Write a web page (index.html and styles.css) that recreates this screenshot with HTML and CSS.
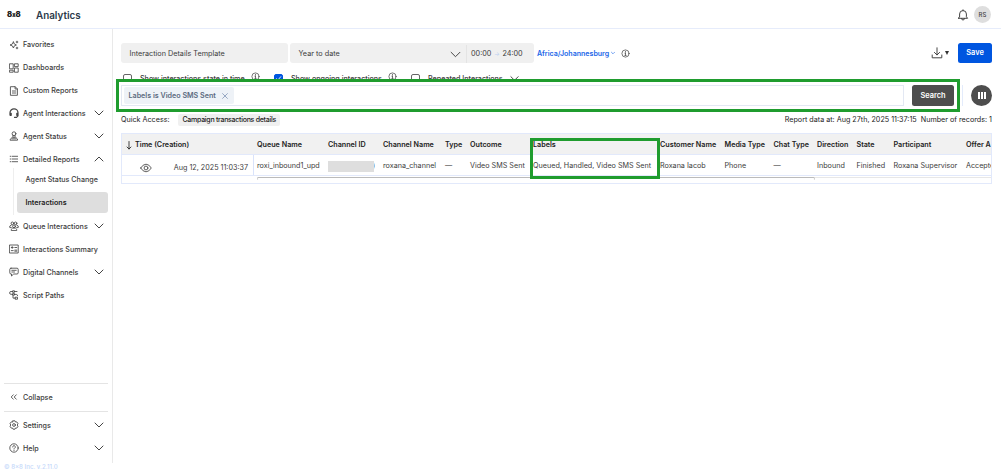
FILE: index.html
```
<!DOCTYPE html>
<html lang="en">
<head>
<meta charset="utf-8">
<title>Analytics</title>
<link rel="stylesheet" href="styles.css">
</head>
<body>
<svg class="defs" aria-hidden="true">
  <symbol id="down" viewBox="0 0 10 10"><path d="M1 3l4 4 4-4"/></symbol>
  <symbol id="up" viewBox="0 0 10 10"><path d="M1 7l4-4 4 4"/></symbol>
  <symbol id="info" viewBox="0 0 10 10"><circle cx="5" cy="5" r="4"/><path d="M5 4.6v2.5M4.3 4.6H5M4.2 7.1h1.6M5 2.6v.8"/></symbol>
</svg>
<header class="top">
  <span class="logo">8<small>x</small>8</span>
  <h1 class="title">Analytics</h1>
  <svg class="bell" viewBox="0 0 12 12"><path d="M1.400 9.300h9.200L9.400 7.800V5A3.400 3.400 0 0 0 2.600 5v2.800zM4.500 9.500a1.500 1.500 0 0 0 3 0M6 .8v.8"/></svg>
  <span class="avatar">RS</span>
</header>
<div class="body">
  <nav class="side">
    <div class="item"><svg class="ico" viewBox="0 0 10 10"><path d="M4.400 2Q4.700 4.700 7.400 5 4.700 5.300 4.400 8 4.100 5.300 1 5 4.100 4.700 4.400 2zM8 1.200v1.600M7.200 2h1.600M8 7.200v1.600M7.200 8h1.600"/></svg><span>Favorites</span></div>
    <div class="item"><svg class="ico" viewBox="0 0 10 10"><path d="M.8.8h3.400v5H.8zM5.800.8h3.400v2.800H5.800zM.8 7.200h3.400v2H.8zM5.800 5h3.400v4.200H5.800z"/></svg><span>Dashboards</span></div>
    <div class="item"><svg class="ico" viewBox="0 0 10 10"><path d="M1.800.7h4.400l2.200 2.200v6.400H1.800zM6.100.8V3h2.200M3.400 5h3.400M3.400 7h3.400"/></svg><span>Custom Reports</span></div>
    <div class="item"><svg class="ico bold" viewBox="0 0 10 10"><path d="M1 7V4.800a4 4 0 0 1 8 0V7.800L7.500 9.300H5.500M1.200 5.300h1v2h-1zM7.800 5.300h1v2h-1z"/></svg><span>Agent Interactions</span><svg class="chev"><use href="#down"/></svg></div>
    <div class="item"><svg class="ico" viewBox="0 0 10 10"><circle cx="5" cy="2.700" r="1.900"/><path d="M3.400 5h3.200M1.500 9.200h7V8L6.800 6.400H3.200L1.500 8zM3 7.800h4"/></svg><span>Agent Status</span><svg class="chev"><use href="#down"/></svg></div>
    <div class="item"><svg class="ico" viewBox="0 0 10 10"><path d="M3.400 2.300h5.200M3.400 5h5.200M3.400 7.700h5.200M1.200 2.300h.8M1.200 5h.8M1.200 7.700h.8"/></svg><span>Detailed Reports</span><svg class="chev"><use href="#up"/></svg></div>
    <div class="sub">
      <div class="subitem">Agent Status Change</div>
      <div class="subitem active">Interactions</div>
    </div>
    <div class="item"><svg class="ico" viewBox="0 0 10 10"><circle cx="3.400" cy="2.300" r="1.300"/><circle cx="6.600" cy="2.300" r="1.300"/><circle cx="5" cy="5.300" r="1.400"/><path d="M2.300 9.200V8.300l1.300-1.200h2.800l1.300 1.200v.9zM2.500 3.900L.8 5v1.600h1.500M7.500 3.900L9.200 5v1.600H7.700"/></svg><span>Queue Interactions</span><svg class="chev"><use href="#down"/></svg></div>
    <div class="item"><svg class="ico" viewBox="0 0 10 10"><path d="M.8 1h8.400v8H.8zM2.300 3.500h1.900M5.800 3.500h1.900M3.200 2.600v1.800M2.300 6.600h1.900M5.800 6.100h1.900M5.800 7.200h1.900"/></svg><span>Interactions Summary</span></div>
    <div class="item"><svg class="ico" viewBox="0 0 10 10"><path d="M2 1.200h6a1.200 1.200 0 0 1 1.200 1.200v3.400A1.200 1.200 0 0 1 8 7H4.700L2.500 9V7H2A1.200 1.200 0 0 1 .8 5.800V2.400A1.200 1.200 0 0 1 2 1.200zM2.800 3.300h4.400M2.800 5h2.700"/></svg><span>Digital Channels</span><svg class="chev"><use href="#down"/></svg></div>
    <div class="item"><svg class="ico" viewBox="0 0 10 10"><path d="M3.500 1.500H2a1.300 1.300 0 0 0 0 2.800h1.500M4 .8h1.500v1.500H4zM5.500 1.500H8M4 3.600h1.500v1.500H4zM5.500 4.400h1.800a1.300 1.300 0 0 1 1.300 1.300M4 5.100v3h2.400M6.500 7.200h2v2h-2z"/></svg><span>Script Paths</span></div>
    <div class="bottom">
      <div class="collapse item"><svg class="ico" viewBox="0 0 10 10"><path d="M4.300 2.800L2.200 5l2.100 2.200M7.300 2.800L5.200 5l2.100 2.200"/></svg><span>Collapse</span></div>
      <div class="item"><svg class="ico" viewBox="0 0 10 10"><path d="M4 .8h2l.5 1.200 1.300-.1 1.200 1.800-.8 1.300.8 1.300-1.200 1.800-1.300-.1L6 9.200H4L3.500 8l-1.300.1L1 6.300 1.800 5 1 3.700l1.200-1.800 1.300.1z"/><circle cx="5" cy="5" r="1.400"/></svg><span>Settings</span><svg class="chev"><use href="#down"/></svg></div>
      <div class="item"><svg class="ico" viewBox="0 0 10 10"><circle cx="5" cy="5" r="4.200"/><path d="M3.700 4a1.300 1.300 0 1 1 1.900 1.100Q5 5.400 5 6M5 7.300v.2"/></svg><span>Help</span><svg class="chev"><use href="#down"/></svg></div>
    </div>
  </nav>
  <main class="main">
    <div class="filters">
      <div class="field template">Interaction Details Template</div>
      <div class="field range"><span>Year to date</span><svg class="chev"><use href="#down"/></svg><div class="times"><span>00:00</span><i>→</i><span>24:00</span></div></div>
      <span class="zone">Africa/Johannesburg</span><svg class="tiny"><use href="#down"/></svg>
      <svg class="info"><use href="#info"/></svg>
      <svg class="download" viewBox="0 0 12 12"><path d="M6 .8v7M3.400 5.400L6 8l2.600-2.600M1.200 8v2.800h9.600V8"/></svg><span class="caret"></span>
      <button class="save">Save</button>
    </div>
    <div class="checks">
      <div class="check first"><span class="box"></span><span>Show interactions state in time</span><svg class="info"><use href="#info"/></svg></div>
      <div class="check second"><span class="box on"><svg viewBox="0 0 8 8"><path d="M1.500 4.200l1.800 1.600 3.200-3.800"/></svg></span><span>Show ongoing interactions</span><svg class="info"><use href="#info"/></svg></div>
      <div class="check"><span class="box"></span><span>Repeated Interactions</span><svg class="chev"><use href="#down"/></svg></div>
    </div>
    <div class="searchrow">
      <div class="highlight">
        <div class="input"><span class="tag">Labels is Video SMS Sent<svg viewBox="0 0 6 6"><path d="M.6.6l4.800 4.800M5.400.6L.6 5.400"/></svg></span></div>
        <button class="search">Search</button>
      </div>
      <span class="rule"></span>
      <span class="columns"><i></i><i></i><i></i></span>
    </div>
    <div class="quick"><span class="qlabel">Quick Access:</span><span class="qchip">Campaign transactions details</span><span class="report">Report data at: Aug 27th, 2025 11:37:15</span><span class="records">Number of records: 1</span></div>
    <section class="table">
      <div class="row head"><div class="time"><svg class="sort" viewBox="0 0 6 9"><path d="M3 .5v7.500M1 6l2 2 2-2"/></svg><span>Time (Creation)</span></div><span>Queue Name</span><span>Channel ID</span><span>Channel Name</span><span>Type</span><span>Outcome</span><span>Labels</span><span>Customer Name</span><span>Media Type</span><span>Chat Type</span><span>Direction</span><span>State</span><span>Participant</span><span>Offer A</span></div>
      <div class="row data"><div class="time"><svg class="eye" viewBox="0 0 12 10"><path d="M.7 5Q3 1.200 6 1.200T11.300 5Q9 8.800 6 8.800T.7 5z"/><circle cx="6" cy="5" r="1.900"/></svg><span class="date">Aug 12, 2025 11:03:37</span></div><span>roxi_inbound1_upd</span><span class="id"><b class="redacted"></b>)</span><span>roxana_channel</span><span>—</span><span>Video SMS Sent</span><span>Queued, Handled, Video SMS Sent</span><span>Roxana Iacob</span><span>Phone</span><span>—</span><span>Inbound</span><span>Finished</span><span>Roxana Supervisor</span><span>Accepte</span></div>
      <div class="scroll"><div class="track"><div class="thumb"></div></div></div>
      <div class="labelmark"></div>
    </section>
  </main>
</div>
<footer class="copy">© 8x8 Inc. v.2.11.0</footer>
</body>
</html>
```
FILE: styles.css
```
* { box-sizing: border-box; }
body { margin: 0; width: 1001px; height: 474px; overflow: hidden; background: #fff; color: #3c3c3c; font: 500 7.150px/10px Inter, sans-serif; white-space: nowrap; }
svg { display: block; flex: none; fill: none; stroke: #444; stroke-width: .85; stroke-linejoin: round; stroke-linecap: round; }
.defs { position: absolute; width: 0; height: 0; }
button { border: 0; padding: 0; font: 600 7.400px/10px Inter, sans-serif; color: #fff; border-radius: 2.500px; }

.top { height: 29px; display: flex; align-items: center; border-bottom: 1px solid #e6ecfb; padding: 1px 10px 0 7px; }
.logo { width: 29px; font-weight: 900; font-size: 7.600px; color: #222; }
.logo small { font-size: 5.500px; }
.title { margin: 0; font: 600 9.850px/14px Inter, sans-serif; color: #2b3a4a; flex: 1; }
.bell { width: 12px; height: 12px; margin-right: 5px; stroke-width: 1; }
.avatar { width: 17px; height: 17px; border-radius: 50%; background: #dedede; font-size: 6px; line-height: 17px; text-align: center; color: #444; }

.body { display: flex; height: 434px; }
.side { width: 113px; border-right: 1px solid #e9e9e9; display: flex; flex-direction: column; padding: 4.500px 4px 0; }
.item { height: 22.850px; display: flex; align-items: center; padding: 0 5px 0 4.500px; flex: none; }
.item span { margin-left: 4.500px; flex: 1; padding-top: 1px; }
.ico { width: 10px; height: 10px; }
.bold { stroke-width: 1.200; }
.chev { width: 9px; height: 9px; stroke-width: 1.100; }
.side .chev { width: 10px; height: 10px; margin-right: -.500px; stroke-width: 1; }
.sub { margin: -3px 0 .500px 9px; padding-left: 3px; border-left: 1px solid #eee; }
.subitem { height: 24px; line-height: 24px; padding-left: 8.500px; }
.active { height: 21px; line-height: 21.500px; background: #dedede; border-radius: 3px; font-weight: 600; color: #222; width: 91px; margin-bottom: 2px; }
.bottom { margin-top: auto; border-top: 1px solid #e4e4e4; padding-bottom: 3.500px; }
.collapse { height: 28px; border-bottom: 1px solid #e4e4e4; margin-bottom: 2px; }
.copy { color: #c4d8fa; font-weight: 500; font-size: 6.100px; line-height: 8px; padding-left: 4px; }

.main { flex: 1; min-width: 0; padding: 14px 9px 0 8px; }
.filters { display: flex; align-items: center; height: 20px; }
.field { height: 20px; background: #f0f0f0; border-radius: 3px; display: flex; align-items: center; padding-left: 8.500px; font-size: 7.250px; }
.template { width: 167px; margin-right: 2px; padding-top: 1px; font-weight: 400; }
.range { width: 244px; font-weight: 400; padding-top: 2px; }
.range > .chev { width: 11px; height: 11px; margin-left: auto; margin-right: 5px; stroke-width: .900; }
.times { width: 68px; height: 18px; border-left: 1px solid #e4e4e4; display: flex; align-items: center; padding-left: 4px; }
.times i { width: 11px; text-align: center; color: #bdd0f0; font-style: normal; font-size: 6px; }
.zone { color: #1b66e8; font-weight: 600; font-size: 7.050px; margin-left: 3px; padding-top: 1px; }
.tiny { width: 4px; height: 4px; margin: 0 6px 0 2px; stroke: #1b66e8; stroke-width: 1.500; }
.info { width: 9px; height: 9px; stroke-width: .800; }
.download { width: 12px; height: 12px; margin-left: auto; stroke-width: 1; }
.caret { border: 2.500px solid transparent; border-top: 4px solid #333; border-bottom: 0; margin: 0 9px 0 2px; }
.save { width: 34px; height: 20px; background: #0056e0; }

.checks { height: 16px; display: flex; padding: 9px 0 0 2px; }
.check { flex: none; display: flex; align-items: center; height: 12px; }
.check > span:nth-child(2) { padding-top: 1px; }
.first { width: 151px; }
.second { width: 137px; }
.box { width: 9px; height: 9px; border: 1px solid #666; border-radius: 2px; margin-right: 8px; }
.on { background: #0056e0; border-color: #0056e0; }
.on svg { width: 7px; height: 7px; stroke: #fff; stroke-width: 1; }
.check .info { margin-top: -3px; margin-left: 6px; }
.check .chev { margin-left: 7px; margin-top: 1px; }

.searchrow { position: relative; display: flex; align-items: center; margin-left: -5px; height: 33px; }
.highlight { width: 844px; height: 33px; border: 3px solid #1f9c2e; background: #fff; display: flex; align-items: center; padding: 0 3px 0 2px; }
.input { width: 783px; height: 21px; border: 1px solid #e3e8f3; padding: 1px 2px; }
.tag { display: flex; align-items: center; width: 110px; height: 17px; background: #eef2f7; border-radius: 2px; padding-left: 4.500px; color: #5c6b80; font-weight: 600; }
.tag svg { width: 6px; height: 6px; margin-left: 6px; stroke: #8296b5; stroke-width: .800; }
.search { width: 42px; height: 21px; margin-left: auto; background: #4d4d4d; }
.rule { width: 1px; height: 21px; background: #e3ebfb; margin: 0 8px 0 2px; }
.columns { width: 21px; height: 21px; border-radius: 50%; background: #4d4d4d; display: flex; justify-content: center; align-items: center; gap: 1px; }
.columns i { width: 2px; height: 7px; background: #fff; }

.quick { height: 21px; display: flex; align-items: center; padding-bottom: 6px; font-weight: 400; font-size: 7.200px; color: #222; }
.qlabel { width: 57px; }
.qchip { width: 102px; height: 12px; line-height: 12px; padding: 0 4.500px; background: #f0f0f0; border-radius: 2px; font-weight: 500; font-size: 7px; letter-spacing: -.270px; }
.report { margin-left: auto; margin-right: 4px; }

.table { position: relative; width: 871px; height: 51px; border: 1px solid #e2e9fb; overflow: hidden; }
.row { display: grid; grid-template-columns: 135px 71px 55px 62px 25px 63px 127px 64.500px 49px 43.500px 39.500px 37px 72.500px 60px; align-items: center; font-size: 7.200px; }
.row > span { padding-top: 2px; }
.head { height: 21px; background: #f1f1f1; border-bottom: 1px solid #e2e9fb; font-weight: 600; color: #222; }
.head .time span { padding-top: 2px; }
.data { height: 21px; font-weight: 400; border-bottom: 1px solid #e2e9fb; }
.time { display: flex; align-items: center; height: 20px; width: 132px; }
.data .time { border-right: 1px solid #d9e3fb; padding-top: 5px; }
.sort { width: 6px; height: 9px; margin: 2px 3px 0 4px; stroke: #222; }
.eye { width: 12px; height: 10px; margin-left: 18px; }
.date { margin-left: auto; margin-right: 5px; }
.id { display: flex; align-items: center; }
.redacted { width: 46px; height: 11px; background: #dedede; margin-right: -1.500px; position: relative; }
.scroll { padding: 1px 0 0 135px; }
.track { height: 4px; border-top: 1px solid #e7e7e7; }
.thumb { width: 558px; height: 3px; margin-top: -1px; border-top: 1px solid #bbb; border-radius: 2px; border-left: 1px solid #ccc; border-right: 1px solid #ccc; }
.labelmark { position: absolute; left: 408px; top: 4px; width: 130px; height: 41px; border: 3px solid #1f9c2e; }
```
